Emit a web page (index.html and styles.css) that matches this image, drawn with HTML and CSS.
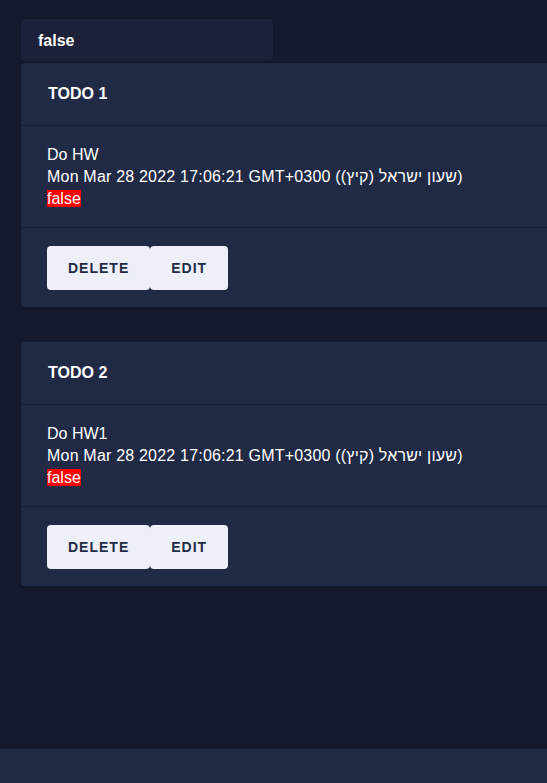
FILE: index.html
```html
<!DOCTYPE html>
<html lang="en">
<head>
<meta charset="utf-8">
<title>Todos</title>
<link rel="stylesheet" href="styles.css">
</head>
<body>
<main class="page">
  <div class="status">false</div>
  <section class="card">
    <header class="card-header">TODO 1</header>
    <div class="card-body">
      <div class="line">Do HW</div>
      <div class="line date">Mon Mar 28 2022 17:06:21 GMT+0300 (שעון ישראל (קיץ))</div>
      <div class="line"><span class="flag">false</span></div>
    </div>
    <footer class="card-footer">
      <button class="btn">Delete</button><button class="btn">Edit</button>
    </footer>
  </section>
  <section class="card">
    <header class="card-header">TODO 2</header>
    <div class="card-body">
      <div class="line">Do HW1</div>
      <div class="line date">Mon Mar 28 2022 17:06:21 GMT+0300 (שעון ישראל (קיץ))</div>
      <div class="line"><span class="flag">false</span></div>
    </div>
    <footer class="card-footer">
      <button class="btn">Delete</button><button class="btn">Edit</button>
    </footer>
  </section>
</main>
<div class="bottom-bar"></div>
</body>
</html>
```
FILE: styles.css
```css
html, body {
  margin: 0;
  padding: 0;
  overflow: hidden;
}
body {
  background: #151a2f;
  color: #ffffff;
  font-family: "Liberation Sans", Arial, sans-serif;
  width: 547px;
  height: 783px;
  position: relative;
}
.page {
  padding: 19px 0 0 21px;
  display: flex;
  flex-direction: column;
  align-items: flex-start;
}
.status {
  width: 252px;
  height: 42px;
  box-sizing: border-box;
  background: #1c2039;
  border-radius: 4px;
  padding: 0 17px;
  font-size: 16px;
  font-weight: bold;
  line-height: 43px;
  box-shadow: 0 0 2px rgba(0,0,0,0.25);
}
.card {
  width: 620px;
  background: #212a45;
  border-radius: 4px;
  margin-top: 2px;
  margin-bottom: 33px;
  box-shadow: 0 1px 2px rgba(0,0,0,0.3);
}
.card-header {
  height: 63px;
  box-sizing: border-box;
  padding: 0 27px;
  line-height: 62px;
  font-size: 16px;
  font-weight: bold;
  border-bottom: 1px solid #171c31;
}
.card-body {
  padding: 18px 26px 17px;
  font-size: 16px;
  line-height: 22px;
  border-bottom: 1px solid #171c31;
}
.line {
  height: 22px;
  white-space: nowrap;
}
.date {
  letter-spacing: 0.2px;
}
.flag {
  background: #ff0000;
  color: #ffffff;
}
.card-footer {
  padding: 18px 26px 17px;
  display: flex;
}
.btn {
  height: 44px;
  border: none;
  border-radius: 4px;
  background: #edf0f8;
  color: #222a44;
  font-family: "Liberation Sans", Arial, sans-serif;
  font-weight: bold;
  font-size: 14px;
  letter-spacing: 1px;
  text-transform: uppercase;
  padding: 0 21px;
  cursor: pointer;
}
.bottom-bar {
  position: absolute;
  left: 0;
  right: 0;
  top: 749px;
  height: 34px;
  background: #212a45;
}
```
